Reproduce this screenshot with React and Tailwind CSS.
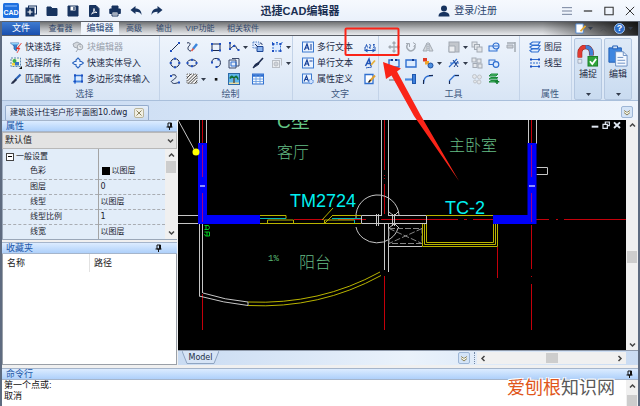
import React from "react";

const INK = "#1b2a4e";
const BLUE = "#2f6fd0";
const GREY = "#a3aab3";

function Icon({ children, size = 12, label }) {
  return (
    <svg
      viewBox="0 0 12 12"
      width={size}
      height={size}
      fill="none"
      stroke={INK}
      strokeWidth="1"
      className="shrink-0"
      role={label ? "img" : undefined}
      aria-label={label}
      aria-hidden={label ? undefined : true}
    >
      {children}
    </svg>
  );
}

const Dot = ({ x, y, c = "#1f4fc0" }) => (
  <rect x={x - 1} y={y - 1} width="2" height="2" fill={c} stroke="none" />
);

const ICONS = {
  quick: (
    <>
      <path d="M.5 2h8.500L6.500 5v5L4 8V5z" fill="#3b83cf" stroke="#1e5aa0" strokeWidth=".7" />
      <path d="M1 2h8L8 3.500H2z" fill="#8fd0f5" stroke="none" />
      <path d="M11.500 2L8 7h2l-3 5L9 8H6z" fill="#e8281e" stroke="#e8281e" strokeWidth=".4" />
    </>
  ),
  selectAll: (
    <>
      <rect x="1" y="1" width="9.500" height="8.500" fill="#eef6e0" stroke="#5b86b5" strokeDasharray="2 1" />
      <circle cx="4.500" cy="4" r="2" fill="#3aa84a" stroke="none" />
      <rect x="5" y="5" width="4" height="3.500" fill="#3674c9" stroke="none" />
      <rect x="2" y="6" width="3" height="2.500" fill="#f3cf3c" stroke="none" />
      <path d="M12 9v3H9z" fill="#111" stroke="none" />
    </>
  ),
  match: (
    <>
      <path d="M10.500 1.500L5 7" stroke="#2b62b5" strokeWidth="2.200" />
      <path d="M5.500 5.500l1.500 1.500L3.500 10.500 1 11l.8-2z" fill="#27304a" stroke="none" />
    </>
  ),
  blockEdit: (
    <g stroke={GREY}>
      <path d="M1 3l4-2 4 2-1 3-3 1-3-1z" fill="#d5d9de" />
      <circle cx="8" cy="6" r="2.800" fill="#e8ebee" />
      <path d="M6 8l-2 3M8 4.500V6h1.500" />
    </g>
  ),
  importSolid: (
    <path d="M6 1L8 3v1.500h1.500L11.500 6l-2 1.500H8V9L6 11 4 9V7.500H2.500L.5 6l2-1.500H4V3z" stroke="#2c66c0" fill="#eaf3ff" strokeWidth="1.100" />
  ),
  polySolid: (
    <>
      <path d="M3 2.500h7v6H3z" fill="#dcebff" stroke={BLUE} strokeWidth="1.300" />
      <path d="M3 1v10M1 8.500h10" stroke="#4a8ae0" strokeWidth="1.300" />
      <Dot x={3} y={2.5} /><Dot x={10} y={2.5} /><Dot x={3} y={8.5} /><Dot x={10} y={8.5} />
    </>
  ),
  line: (<><path d="M2.500 9.500l7-7" /><Dot x={2} y={10} /><Dot x={10} y={2} /></>),
  sketch: (
    <>
      <path d="M1 2c3-1 4 1 2 3s-1 5 2 5" />
      <path d="M11 3L7 8" stroke="#3a86dd" strokeWidth="2.400" />
      <path d="M7.500 7.500L5.500 10" stroke="#e05848" strokeWidth="1.600" />
    </>
  ),
  rect: (<><path d="M2 3h8v6.500H2z" /><Dot x={2} y={3} /><Dot x={10} y={3} /><Dot x={2} y={9.5} /><Dot x={10} y={9.5} /></>),
  pline: (<><path d="M2 1v7l4-3.500c2-1.500 2 4.500 5 4.500" /><Dot x={2} y={2} /><Dot x={2} y={8} /><Dot x={6} y={5} /><Dot x={10.5} y={9} /></>),
  copyBlock: (
    <>
      <path d="M1 1h6v6H1z" fill="#dbe9ff" stroke="#5180c4" strokeDasharray="1.500 1" />
      <path d="M5 5.500h6v5H5z" fill="#8cb4ee" stroke="#1c4696" />
      <path d="M3 3l3 3M8 2c2 0 2 1 2 2" stroke="#1c3060" />
    </>
  ),
  region: (
    <>
      <path d="M2 3h7.500v7H2z" stroke={BLUE} strokeDasharray="2 1" fill="#dcebff" />
      <path d="M1 1l2 2M9.500 3l2-2M5 1.500h2" stroke={BLUE} />
      <Dot x={2} y={3} /><Dot x={2} y={10} /><Dot x={9.5} y={10} /><Dot x={9.5} y={3} />
    </>
  ),
  circle: (<><circle cx="6" cy="6" r="4.300" /><Dot x={6} y={1.7} /><Dot x={6} y={10.3} /><Dot x={1.7} y={6} /><Dot x={10.3} y={6} /></>),
  ellipse: (<><ellipse cx="6" cy="6" rx="4.600" ry="3.200" /><Dot x={6} y={2.8} /><Dot x={6} y={9.2} /><Dot x={1.5} y={6} /><Dot x={10.5} y={6} /></>),
  arc: (<><path d="M1.800 5.500A4.300 4.300 0 1 1 6.500 10" /><Dot x={2} y={5.5} /><Dot x={6.5} y={10} /><Dot x={8.5} y={2.5} /></>),
  wipe: (
    <>
      <path d="M1 3h7v8H1z" fill="#e3ecf8" stroke="#3c4a6a" />
      <path d="M4 1.500h7v7.500H8" stroke="#3c4a6a" />
      <path d="M3 5h5v4H3z" stroke={BLUE} />
    </>
  ),
  brush: (<><path d="M11 1L6 6.500" strokeWidth="1.600" /><path d="M6.500 5.500L7 7 3.500 9.500 1 11l2-3.500z" fill={INK} /></>),
  greyBox: (
    <g stroke="#b9bec5">
      <rect x="1.500" y="3.500" width="7" height="7" fill="#e9ecef" />
      <path d="M3.500 1.500h7v7" /><circle cx="5" cy="7" r="2" fill="#cfd3d8" />
    </g>
  ),
  spline: (<><path d="M2 3c2-2.500 7-1 4.500 2S1 7.500 3 9.500s4 .500 7 0" /><Dot x={2} y={3} /><Dot x={10} y={9.5} /></>),
  hatch: (
    <>
      <rect x="1" y="1" width="10" height="9.500" stroke="#777" strokeDasharray="1 1" fill="#f2f2f2" />
      <path d="M1 5l4-4M1 8.500L8.500 1M2 10.500L11 2M5 10.500l6-6M8.500 10.500L11 8" stroke="#333" strokeWidth=".9" />
    </>
  ),
  point: <rect x="4.800" y="5" width="2.600" height="2.600" fill="#111" stroke="none" />,
  image: (
    <>
      <rect x=".5" y=".5" width="11" height="11" fill="#5fb6ea" stroke="#2c6aa8" />
      <path d="M1 9.500h10V11H1z" fill="#e9dca0" stroke="none" />
      <path d="M6 4v6" stroke="#5a3a18" strokeWidth="1.200" />
      <path d="M6 4.500C4 2 2 3 2 5.500 3 4.500 4.500 4.500 6 4.500 8 4 9.500 4.500 10 6.500 10 3 8 2 6 4.500z" fill="#138038" stroke="#0d6a2c" />
    </>
  ),
  table: (
    <>
      <rect x=".5" y="1" width="11" height="10" fill="#f3f9ff" stroke={BLUE} />
      <path d="M.5 2.500h11" stroke={BLUE} strokeWidth="2.500" />
      <path d="M.5 6h11M.5 8.500h11M4 2v9M8 2v9" stroke="#5f98e0" strokeWidth=".8" />
    </>
  ),
  mtext: (
    <>
      <rect x=".5" y="1" width="11" height="10" fill="#eaf3ff" stroke="#3b79cf" />
      <path d="M2.500 9L5 3l2 6M3.500 7h3" stroke="#143f98" strokeWidth="1.200" />
      <path d="M9 3v6" stroke="#143f98" />
    </>
  ),
  stext: (
    <>
      <rect x=".5" y="1" width="11" height="10" fill="#eaf3ff" stroke="#3b79cf" />
      <path d="M2.500 9L5 3l2 6M3.500 7h3" stroke="#143f98" strokeWidth="1.200" />
      <path d="M7.500 4h3" stroke="#143f98" />
    </>
  ),
  attdef: (
    <>
      <rect x=".5" y="1" width="9" height="9" fill="#eaf3ff" stroke="#3b79cf" />
      <path d="M2 8.500L4.500 3l2 5.500M3 6.500h3" stroke="#143f98" strokeWidth="1.100" />
      <circle cx="9" cy="8.500" r="2.200" fill="#cfe2ff" stroke="#2f6fd0" strokeDasharray="1.200 .6" />
    </>
  ),
  dim: (
    <>
      <path d="M1 6v4M11 6v4M1 9.500h10" stroke="#2156b8" />
      <path d="M.5 9.500l3-2v4zM11.500 9.500l-3-2v4z" fill="#2156b8" stroke="none" />
      <path d="M1.500 6.500l1-3 1 3M5 4c1-1 2 0 1.500 1L5 7h2M9 3.500h1.500l-1 1.500c1.500 0 1 2-.5 1.500" stroke="#2156b8" />
    </>
  ),
  textEdit: (
    <>
      <path d="M1.500 9L5 2l2 7M3 6.500h4" stroke="#2156b8" strokeWidth="1.500" />
      <path d="M11 3.500L7 8" stroke="#e8b03a" strokeWidth="1.800" />
      <path d="M2 11c2-1 5 0 6-1.500" stroke="#2156b8" />
    </>
  ),
  editBox: (
    <>
      <path d="M1 1.500h8v9H1z" fill="#fff" stroke={BLUE} strokeWidth="1.300" />
      <path d="M11 2.500L6 8" stroke="#e0a030" strokeWidth="2" />
      <path d="M6.500 7L4.500 9.500" stroke="#222" strokeWidth="1.300" />
    </>
  ),
  move: <path d="M6 1v10M1 6h10M4.500 2.500L6 1l1.500 1.500M4.500 9.500L6 11l1.500-1.500M2.500 4.500L1 6l1.500 1.500M9.500 4.500L11 6 9.500 7.500" stroke={GREY} strokeWidth="1.300" />,
  rotate: (<><path d="M3 3a4 4 0 1 0 6.500 1" stroke={GREY} strokeWidth="1.500" /><path d="M1 2.500h3.500V6M8 1.500l3 2-2.500 2" stroke={GREY} /></>),
  mirror: (<><path d="M5 2v8H1zM7 2v8h4z" fill="#d5d9de" stroke={GREY} /><path d="M6 1v10" stroke={GREY} strokeDasharray="1 1" /></>),
  scale: (<><rect x="1" y="1" width="10" height="10" fill="#c3c7cd" stroke={GREY} /><path d="M1 5h6v6H1z" fill="#eceef1" stroke={GREY} /></>),
  copy: (<g stroke={GREY} fill="#e3e6ea"><rect x="1" y="1" width="5" height="5" /><rect x="3.500" y="3.500" width="5" height="5" /><rect x="6" y="6" width="5" height="5" /></g>),
  array: (<g stroke={GREY} fill="#e3e6ea"><rect x="1" y="1" width="4" height="4" /><rect x="6" y="2" width="4" height="4" /><rect x="2" y="6.500" width="4" height="4" /><rect x="7" y="7" width="4" height="4" /></g>),
  offset: (<><rect x="1" y="5" width="8" height="5" fill="#dcebff" stroke={BLUE} /><circle cx="8" cy="5" r="3" fill="#dcebff" stroke={BLUE} strokeWidth="1.200" /><path d="M6 5h4" stroke={BLUE} /></>),
  offset2: (<><rect x="1" y="3" width="6" height="4.500" stroke={BLUE} fill="#dcebff" /><circle cx="8" cy="7.500" r="2.800" stroke={BLUE} fill="#dcebff" strokeWidth="1.200" /></>),
  align: (<><path d="M2 2h8M10 1v10" stroke={GREY} strokeWidth="1.500" /><path d="M2 4h6v3H2z" fill="#c9cdd3" stroke={GREY} /></>),
  breakBox: (<><path d="M4 3H1v7h10V3H8" stroke={BLUE} strokeWidth="1.400" fill="#dcebff" /><Dot x={4} y={3} c="#123a90" /><Dot x={8} y={3} c="#123a90" /></>),
  breakBox2: (<><path d="M1 3h10v7H1z" stroke={BLUE} strokeWidth="1.400" fill="#dcebff" /><Dot x={8} y={3} c="#123a90" /></>),
  join: (<><rect x="1" y="1" width="4" height="3.500" fill="#e03a28" stroke="none" /><rect x="3" y="4" width="4" height="3.500" fill="#f0a52c" stroke="none" /><circle cx="8.500" cy="8.500" r="2.500" fill="#4c8fe0" stroke="#1d4f9f" /></>),
  trim: (<><path d="M1 10L9 2M2 6h9" stroke={BLUE} strokeWidth="1.200" /><path d="M5 3l5 7M10 4l-4 6" stroke="#173c86" /></>),
  explode: (<g fill="#e3e6ea" stroke="#c0c5cb"><circle cx="3.500" cy="3.500" r="2" /><circle cx="8.500" cy="4" r="2" /><circle cx="4" cy="8.500" r="1.500" /><circle cx="8" cy="9" r="2" /></g>),
  lengthen: (<><path d="M1 7h6" stroke={GREY} strokeWidth="2" /><path d="M8 3v7M10 3v7" stroke={GREY} /></>),
  extend: (<><path d="M0 6.500h7" stroke="#4a8ae0" strokeWidth="2.200" /><rect x="7.500" y="1.500" width="3" height="9" fill="#3c7fdc" stroke="#1f57ad" /></>),
  fillet: (<><path d="M1.500 11c0-6 2-8.500 9.500-8.500" stroke={BLUE} strokeWidth="1.300" /><path d="M1.500 11V7M7 2.500h4" stroke={INK} /></>),
  chamfer: (<><path d="M1.500 11V7.500l5-5H11" stroke={BLUE} strokeWidth="1.300" /><path d="M1.500 11V8M7 2.500h4" stroke={INK} /></>),
  layersAdd: (<><path d="M1 3l2-2h7l-2 2zM1 6l2-1.500h7L8 6zM1 9l2-1.500h7L8 9z" fill="#4cb868" stroke="#1d8a3c" /><path d="M9 6.500v4.500M6.800 8.800h4.500" stroke="#128030" strokeWidth="1.600" /></>),
  layers: (<g fill="#e3efff" stroke={BLUE} strokeWidth="1.200"><path d="M1 9.500L3.500 8H11l-2 3H2.500z" /><path d="M1 6L3.500 4.500H11L9 7.500H2.500z" /><path d="M1 3L3.500 1H11L9 4H2.500z" /></g>),
  linetype: (<><path d="M1 2.500h10M1 9.500h10" stroke={BLUE} strokeWidth="1.200" /><path d="M1 6h10" stroke={BLUE} strokeDasharray="2 1" /><Dot x={2} y={2.5} /><Dot x={10} y={2.5} /><Dot x={2} y={9.5} /><Dot x={10} y={9.5} /></>),
};

const Caret = () => (
  <svg viewBox="0 0 5 3" width="5" height="3" className="shrink-0" aria-hidden="true">
    <path d="M0 0h5L2.500 3z" fill="#333c4c" />
  </svg>
);

function Tool({ icon, text, caret, muted, name }) {
  return (
    <button
      type="button"
      aria-label={text ? undefined : name || icon}
      className={`flex h-4 items-center gap-[3px] whitespace-nowrap text-[9px] leading-4 ${muted ? "text-[#98a0ab]" : "text-[#1e2c47]"}`}
    >
      <Icon>{ICONS[icon]}</Icon>
      {text}
      {caret && <Caret />}
    </button>
  );
}

function Group({ title, className, children }) {
  return (
    <section className={`flex shrink-0 flex-col border-r border-[#c3d3e8] pt-[3px] ${className}`}>
      <div className="flex">{children}</div>
      <h2 className="text-center text-[9px] leading-[14px] text-[#41597f]">{title}</h2>
    </section>
  );
}

const Col = ({ className, children }) => <div className={`flex shrink-0 flex-col ${className}`}>{children}</div>;

const Pin = () => (
  <svg viewBox="0 0 7 8" width="7" height="8" aria-hidden="true">
    <path d="M2 1h3.500v4H2zM.5 5h6M3.500 5v3" fill="none" stroke="#111" strokeWidth="1" />
    <path d="M4 1h1.500v4H4z" fill="#111" />
  </svg>
);

function PanelHeader({ title, pin }) {
  return (
    <div className="flex h-3 shrink-0 items-center justify-between border-y border-[#a5b5cb] bg-linear-to-b from-[#dcecff] to-[#aed0fa] pl-1">
      <h2 className="text-[9px] leading-[10px] text-[#2157a8]">{title}</h2>
      <button type="button" aria-label={`固定${title}`} className={pin}>
        <Pin />
      </button>
    </div>
  );
}

function Chevron({ dir, className = "" }) {
  const d = { up: "M1 4.500L3.500 2 6 4.500", down: "M1 2.500L3.500 5 6 2.500", left: "M4.500 1L2 3.500 4.500 6", right: "M2.500 1L5 3.500 2.500 6" }[dir];
  return (
    <svg viewBox="0 0 7 7" width="7" height="7" className={`shrink-0 ${className}`} aria-hidden="true">
      <path d={d} fill="none" stroke="#444" strokeWidth="1.500" />
    </svg>
  );
}

const Heart = () => (
  <button type="button" aria-label="更多" className="flex size-3 shrink-0 items-center justify-center rounded-xs border border-[#9db6d6] bg-[#d4e4f7]">
    <svg viewBox="0 0 8 7" width="8" height="7" aria-hidden="true">
      <path d="M1 1.500l3 2 3-2M1 3.500L4 6l3-2.500" fill="none" stroke="#8d8257" strokeWidth="1" />
      <path d="M1.500 2.800L4 4.500l2.500-1.700" fill="none" stroke="#fffbe0" strokeWidth="1" />
    </svg>
  </button>
);

const QUICK = [
  ["新建", <><rect x="3.500" y="1" width="8" height="8" fill="none" /><rect x="1" y="3" width="8" height="8" fill="#17335f" /><path d="M5 4.500v5M2.500 7h5" stroke="#fff" strokeWidth="1.200" /></>],
  ["打开", <path d="M1 2h4l1 1.500h5V10.500H1z" fill="#17335f" />],
  ["保存", <><path d="M1 1h10v10H1z" fill="#17335f" /><path d="M3.500 1.500h5v4h-5z" fill="#fff" stroke="none" /><path d="M7 2v3" strokeWidth="1.300" /></>],
  ["导出PDF", <><path d="M1.500.5H8l3 3v8H1.500z" fill="#17335f" /><path d="M3.500 9c2-1 2.500-4 2.500-5.500C6 6 7 7.500 9 7.500c-2-.5-4 .500-5.500 1.500z" stroke="#fff" strokeWidth=".9" /></>],
  ["打印", <><path d="M3 1h6v3H3zM.8 4h10.500v4.500H.8z" fill="#17335f" /><path d="M3 7h6v4H3z" fill="#fff" /><path d="M4 9h4" strokeWidth=".8" /></>],
  ["撤销", <path d="M.5 5L5.500 1v2.500c4 0 6 2.500 6 6.500C10.500 7.500 9 6.700 5.500 6.700V9z" fill="#17335f" stroke="none" />],
  ["重做", <path d="M11.500 5L6.500 1v2.500c-4 0-6 2.500-6 6.500C1.500 7.500 3 6.700 6.500 6.700V9z" fill="#17335f" stroke="none" />],
];

function TitleBar() {
  return (
    <header className="relative flex h-[21px] items-center justify-between bg-linear-to-b from-[#f6f9fe] to-[#eaf1fb] pl-[3px] pr-[5px]">
      <div className="flex items-center">
        <svg viewBox="0 0 16 15" width="16" height="15" role="img" aria-label="CAD">
          <rect width="16" height="15" rx="1.500" fill="#1e6fe0" />
          <path d="M2 3h12" stroke="#8fc0ff" strokeWidth="1" />
          <text x="8" y="12" textAnchor="middle" fontSize="7" fontWeight="bold" fill="#fff" className="font-['Liberation_Sans',sans-serif]">CAD</text>
        </svg>
        <div className="ml-[6px] flex gap-[9px]">
          {QUICK.map(([label, art]) => (
            <button key={label} type="button" aria-label={label}>
              <svg viewBox="0 0 12 12" width="12" height="12" fill="none" stroke="#17335f">{art}</svg>
            </button>
          ))}
        </div>
      </div>
      <h1 className="absolute inset-x-0 mx-auto w-fit -translate-x-5 text-[11px] font-bold leading-5 text-[#1a2f52]">迅捷CAD编辑器</h1>
      <div className="flex items-center">
        <button type="button" className="mr-[65px] flex items-center gap-1 text-[10px] leading-5 text-[#29426c]">
          <svg viewBox="0 0 12 12" width="12" height="12" aria-hidden="true">
            <circle cx="6" cy="3.500" r="3" fill="#17335f" />
            <path d="M.5 11.500C.5 8 3 7 6 7s5.500 1 5.500 4.500z" fill="#17335f" />
          </svg>
          登录/注册
        </button>
        <div className="flex items-center gap-[11px]">
          <button type="button" aria-label="菜单"><Icon size={10}><path d="M0 2h12M0 6h12M0 10h12" stroke="#5b6b88" /></Icon></button>
          <button type="button" aria-label="最小化"><Icon size={10}><path d="M1 6h10" strokeWidth="1.500" stroke="#333" /></Icon></button>
          <button type="button" aria-label="最大化"><Icon size={10}><path d="M1 1.500h10v9H1z" strokeWidth="1.300" stroke="#333" /></Icon></button>
          <button type="button" aria-label="关闭"><Icon size={10}><path d="M1 1l10 10M11 1L1 11" strokeWidth="1.200" stroke="#333" /></Icon></button>
        </div>
      </div>
    </header>
  );
}

function Tabs() {
  return (
    <nav className="flex h-[15px] items-stretch justify-between border-y border-[#5a5f68] bg-[linear-gradient(to_right,transparent_85%,rgba(0,0,0,0.85)),linear-gradient(to_bottom,#707274,#b4b6b9_50%,#e9ebee)]">
      <div className="flex">
        <button type="button" className="w-[38px] bg-linear-to-b from-[#3f7bd0] to-[#1a4fae] text-[9px] leading-[13px] text-white">文件</button>
        <button type="button" className="w-[41px] text-[8px] leading-[13px] text-[#33486c]">查看器</button>
        <button type="button" className="w-[38px] bg-[#f0f5fc] text-[9px] leading-[13px] text-[#24406f]">编辑器</button>
        <button type="button" className="w-[30px] text-[8px] leading-[13px] text-[#33486c]">高级</button>
        <button type="button" className="w-[30px] text-[8px] leading-[13px] text-[#33486c]">输出</button>
        <button type="button" className="w-[42px] text-[8px] leading-[13px] text-[#33486c]">VIP功能</button>
        <button type="button" className="w-[44px] text-[8px] leading-[13px] text-[#33486c]">相关软件</button>
      </div>
      <div className="flex items-center gap-[6px] pr-[5px]">
        <button type="button" aria-label="样式" className="flex items-center gap-[2px]">
          <Icon size={11}>
            <path d="M1 1h8v10H1z" fill="#fff" stroke="#4a83cf" />
            <path d="M11.500 3L6 9" stroke="#e6a72e" strokeWidth="2" />
          </Icon>
          <Caret />
        </button>
        <button type="button" aria-label="折叠"><Icon size={9}><path d="M2 6l4-3 4 3M2 9.500l4-3 4 3" stroke="#4c4f55" /></Icon></button>
        <button type="button" aria-label="帮助" className="flex items-center gap-[3px]">
          <span className="flex size-[11px] items-center justify-center rounded-full border border-[#9fc3f2] bg-[#2c6cc8] text-[9px] font-bold leading-none text-white">?</span>
          <Caret />
        </button>
      </div>
    </nav>
  );
}

function Ribbon() {
  return (
    <div className="flex h-[65px] items-stretch border-b border-[#a9bfdb] bg-linear-to-b from-[#eef4fc] to-[#d8e5f5]">
      <Group title="选择" className="w-[158px] pl-2">
        <Col className="w-[62px]">
          <Tool icon="quick" text="快速选择" />
          <Tool icon="selectAll" text="选择所有" />
          <Tool icon="match" text="匹配属性" />
        </Col>
        <Col className="">
          <Tool icon="blockEdit" text="块编辑器" muted />
          <Tool icon="importSolid" text="快速实体导入" />
          <Tool icon="polySolid" text="多边形实体输入" />
        </Col>
      </Group>
      <Group title="绘制" className="w-[133px] pl-[9px]">
        <Col className="w-[17px]"><Tool icon="line" name="直线" /><Tool icon="circle" name="圆" /><Tool icon="spline" name="样条曲线" /></Col>
        <Col className="w-[24px]"><Tool icon="sketch" name="草图" /><Tool icon="ellipse" name="椭圆" /><Tool icon="hatch" name="填充" caret /></Col>
        <Col className="w-[18px]"><Tool icon="rect" name="矩形" /><Tool icon="arc" name="圆弧" /><Tool icon="point" name="点" /></Col>
        <Col className="w-[24px]"><Tool icon="pline" name="多段线" caret /><Tool icon="wipe" name="遮罩" /><Tool icon="image" name="图像" /></Col>
        <Col className="w-[19px]"><Tool icon="copyBlock" name="块" /><Tool icon="brush" name="画笔" /><Tool icon="table" name="表格" /></Col>
        <Col className=""><Tool icon="region" name="面域" caret /><Tool icon="greyBox" name="边界" caret /></Col>
      </Group>
      <Group title="文字" className="w-[86px] pl-[9px]">
        <Col className="w-[62px]">
          <Tool icon="mtext" text="多行文本" />
          <Tool icon="stext" text="单行文本" />
          <Tool icon="attdef" text="属性定义" />
        </Col>
        <Col className=""><Tool icon="dim" name="标注" /><Tool icon="textEdit" name="文字样式" /><Tool icon="editBox" name="编辑文字" /></Col>
      </Group>
      <Group title="工具" className="w-[141px] pl-[9px]">
        <Col className="w-[17px]"><Tool icon="move" name="移动" /><Tool icon="breakBox" name="打断" /><Tool icon="lengthen" name="拉长" /></Col>
        <Col className="w-[17px]"><Tool icon="rotate" name="旋转" /><Tool icon="breakBox2" name="打断于点" /><Tool icon="extend" name="延伸" /></Col>
        <Col className="w-[26px]"><Tool icon="mirror" name="镜像" /><Tool icon="join" name="合并" caret /><Tool icon="fillet" name="圆角" /></Col>
        <Col className="w-[23px]"><Tool icon="scale" name="缩放" caret /><Tool icon="trim" name="修剪" caret /><Tool icon="chamfer" name="倒角" /></Col>
        <Col className="w-[17px]"><Tool icon="copy" name="复制" /><Tool icon="array" name="阵列" /><Tool icon="explode" name="分解" /></Col>
        <Col className="w-[17px]"><Tool icon="offset" name="偏移" /><Tool icon="offset2" name="缩放偏移" /><Tool icon="layersAdd" name="添加图层" /></Col>
        <Col className=""><Tool icon="align" name="对齐" /></Col>
      </Group>
      <Group title="属性" className="w-[52px] pl-[9px]">
        <Col className="h-12">
          <Tool icon="layers" text="图层" />
          <Tool icon="linetype" text="线型" />
        </Col>
      </Group>
      <div className="flex flex-1 gap-[2px] px-[2px] pt-[2px]">
        <BigButton label="捕捉">
          <path d="M3 13V8a6 6 0 0 1 12 0v3" stroke="#8a1d18" strokeWidth="5" />
          <path d="M3 13V8a6 6 0 0 1 6-6" stroke="#e23a30" strokeWidth="4" />
          <path d="M9 2a6 6 0 0 1 6 6v3" stroke="#3e80d8" strokeWidth="4" />
          <path d="M1 15h4v4H1z" fill="#e5e9f0" stroke="#8c99ad" strokeWidth=".7" />
          <rect x="11.500" y="12" width="10" height="10" fill="#2fa53a" stroke="#1b7c26" />
          <path d="M13.500 17l2.500 3 4-5.500" stroke="#fff" strokeWidth="1.800" />
        </BigButton>
        <BigButton label="编辑">
          <path d="M2 3h13v15H2z" fill="#3f86df" stroke="#1f5cb4" />
          <path d="M6 1h5v3H6z" fill="#cfe0f7" stroke="#1f5cb4" />
          <path d="M9 7h8l4 4v11H9z" fill="#f5f9ff" stroke="#6b8fc2" />
          <path d="M17 7v4h4M11 13h6M11 16h8M11 19h8" stroke="#6b8fc2" />
        </BigButton>
      </div>
    </div>
  );
}

function BigButton({ label, children }) {
  return (
    <button type="button" className="flex w-7 flex-col items-center rounded-xs border border-[#b4c7e0] bg-linear-to-b from-[#dde9f7] to-[#c9dbf0] pt-[6px] text-[9px] leading-[14px] text-[#1e2c47]">
      <svg viewBox="0 0 23 23" width="22" height="22" fill="none" aria-hidden="true">{children}</svg>
      {label}
      <span className="flex flex-1 items-end pb-[3px]"><Caret /></span>
    </button>
  );
}

function DocumentTabs() {
  return (
    <div className="flex h-[19px] items-end justify-between bg-linear-to-r from-[#c7daf2] to-[#eef4fc] pl-[3px] pr-[5px]">
      <div className="flex h-[15px] items-center gap-[7px] rounded-t-xs border border-b-0 border-[#93abcc] bg-linear-to-b from-[#e6effa] to-[#cbdcf2] px-1">
        <span className="whitespace-nowrap font-['DejaVu_Sans','Noto_Sans_CJK_SC',sans-serif] text-[8px] leading-[14px] text-[#16233c]">建筑设计住宅户形平面图10.dwg</span>
        <button type="button" aria-label="关闭图纸" className="flex size-[10px] items-center justify-center rounded-xs border border-[#b9b59c] bg-[#f2f0e4]">
          <Icon size={6}><path d="M1 1l10 10M11 1L1 11" stroke="#8a8360" strokeWidth="2" /></Icon>
        </button>
      </div>
      <div className="pb-[2px]"><Heart /></div>
    </div>
  );
}

const PROPS = [["色彩", "以图层", true], ["图层", "0"], ["线型", "以图层"], ["线型比例", "1"], ["线宽", "以图层"]];

function SidePanels() {
  return (
    <aside className="flex w-[175px] shrink-0 flex-col">
      <PanelHeader title="属性" pin="mr-[4px]" />
      <div className="relative">
        <select aria-label="对象" className="block h-[17px] w-full appearance-none border border-[#b8b8b8] bg-[#e3e3e3] pl-[2px] text-[9px] leading-[15px] text-[#222]">
          <option>默认值</option>
        </select>
        <Chevron dir="down" className="pointer-events-none absolute right-[3px] top-[5px]" />
      </div>
      <div className="flex border-b border-l border-[#9aa7b8] bg-[#e2edf9]">
        <table className="flex-1 table-fixed border-collapse font-['DejaVu_Sans','Noto_Sans_CJK_SC',sans-serif] text-[8px] text-[#1c2430]">
          <tbody>
            <tr className="h-[15px]">
              <th scope="colgroup" className="w-[95px] border-r border-[#a4a4a4] p-0 pl-[3px] text-left font-normal leading-[14px]">
                <span className="flex items-center gap-[2px]">
                  <button type="button" aria-label="收起" className="flex size-2 items-center justify-center border border-[#444] bg-white leading-none"><span className="h-px w-1 bg-black" /></button>
                  一般设置
                </span>
              </th>
              <td className="p-0" />
            </tr>
            {PROPS.map(([k, v, swatch]) => (
              <tr key={k} className="h-[15px] border-b border-dashed border-[#a9adb3] last:border-b-0">
                <th scope="row" className="border-r border-solid border-r-[#a4a4a4] p-0 pl-[27px] text-left font-normal leading-[14px]">{k}</th>
                <td className="p-0 pl-[2px] leading-[14px]">
                  <span className="flex items-center gap-[2px]">
                    {swatch && <span className="ml-[1px] size-2 bg-black" />}
                    {v}
                  </span>
                </td>
              </tr>
            ))}
          </tbody>
        </table>
        <div className="flex w-3 shrink-0 flex-col items-center justify-between bg-[#f0f0f0] py-[3px]">
          <Chevron dir="up" />
          <span className="mb-auto mt-[2px] h-3 w-[10px] bg-[#cdcdcd]" />
          <Chevron dir="down" />
        </div>
      </div>
      <div className="h-[2px] shrink-0 bg-[#f0f0f0]" />
      <PanelHeader title="收藏夹" pin="mr-[15px]" />
      <div className="flex-1 border border-t-0 border-[#9aa0a8] bg-white">
        <table className="w-full table-fixed border-collapse text-[9px] leading-[18px] text-[#222]">
          <thead>
            <tr>
              <th scope="col" className="w-1/2 border-r border-[#e2e2e2] p-0 pl-1 text-left font-normal">名称</th>
              <th scope="col" className="p-0 pl-1 text-left font-normal">路径</th>
            </tr>
          </thead>
        </table>
      </div>
    </aside>
  );
}

function FloorPlan() {
  return (
    <svg className="block h-full w-full" role="img" aria-label="住宅户形平面图" fill="none">
      <g transform="translate(-178 -120)">
        <g stroke="#c4000a" strokeWidth="1">
          <path d="M202.500 120v24M202.500 294v36M384.500 120v50M384.500 175v1M384.500 178v1M384.500 184v30M384.500 276v54M531.500 120v24M531.500 225v44M531.500 276v1M531.500 284v46M497.500 247v31" />
          <path d="M294 219.500h30M338 219.500h28M381 219.500h77M464 219.500h3M473 219.500h20M536 219.500h13M556 219.500h2M564 219.500h600" />
        </g>
        <g stroke="#c6c6c6">
          <path d="M199.500 120v24M206.500 120v24M178 215.500h21M178 223.500h21M199.500 224v72M202.500 224v69" />
          <path d="M177 118l18 33" />
          <path d="M381.500 120v96M388.500 120v96M384.500 224v46M388.500 224v48" />
          <path d="M361.500 215.500v8M361.500 215.500h20M388.500 215.500h38M361.500 223.500h65M426.500 216v8M376.500 214v12M378.500 214v12M392.500 214v12M394.500 214v12M389 212l5 4M389 228l5-4M399 211l-4 4M399 228l-4-4" />
          <path d="M389 246.500h33M528.500 120v24M536.500 120v24M536.500 167.500h11v7h-11" />
          <path d="M356 218a21.500 21.500 0 1 1 43 -3M356 227a21.500 19.500 0 0 0 42 1" />
          <path d="M203 293Q225 300 248 302V305.500Q224 303 199 296" />
        </g>
        <g stroke="#858585">
          <path d="M389 228.500h33v15h-33z" strokeDasharray="6 2" />
          <path d="M389 228.500l33 15M422 228.500l-33 15" strokeDasharray="6 2" />
        </g>
        <g stroke="#b9b400">
          <path d="M260 215.500h26v3M260 223.500h101M267.500 223v-3h26v3M332 215.500h29M324.500 223v-3h30M322 220l11-12M325 223l8-8" />
          <path d="M426 215.500h67M422.500 224v22.500h75V224M424.500 224v20.500h71V224M426.500 224v18.500h67V224" />
          <path d="M248 302Q320 305 380 272M248 305.500Q320 309 381 275.500" />
        </g>
        <path d="M260 218.500h26M332 218.500h29M354.500 220v3" stroke="#00b8b8" />
        <path d="M198 143h9v72h53v9h-62zM527.500 143h9v81H493v-9h34.500z" fill="#0000fa" />
        <path d="M202.500 145v32M202.500 193v29M531.500 145v32M531.500 193v29" stroke="#a1008a" />
        <path d="M200 186h5M529 186h6" stroke="#b9b9ff" strokeWidth="1.500" />
        <circle cx="196" cy="152" r="3.500" fill="#ffff00" />
        <path d="M204.500 225.500h4l1 2-1 2h-4M206 226v3M204.500 232h5v4h-4l-1-2M207 232v4" stroke="#00d020" />
        <g fontSize="16" fontWeight="300" fill="#66bd84" className="font-['Noto_Sans_CJK_SC',sans-serif]">
          <text x="277" y="158">客厅</text>
          <text x="449" y="151">主卧室</text>
          <text x="299" y="268">阳台</text>
          <text x="277" y="128" fontSize="19" fontWeight="400" fill="#63c684" className="font-['Liberation_Sans','Noto_Sans_CJK_SC',sans-serif]">C型</text>
        </g>
        <text x="268" y="261" fontSize="9" fill="#58b873" className="font-['Liberation_Mono',monospace]">1%</text>
        <g fontSize="18" fill="#00f0f0" className="font-['Liberation_Sans',sans-serif]">
          <text x="290" y="207">TM2724</text>
          <text x="445" y="214">TC-2</text>
        </g>
      </g>
    </svg>
  );
}

function DrawingArea() {
  return (
    <div className="flex min-w-0 flex-1 flex-col">
      <div className="flex min-h-0 flex-1">
        <div className="relative min-w-0 flex-1 overflow-hidden bg-black">
          <div className="absolute inset-0"><FloorPlan /></div>
          <div className="absolute right-[5px] top-[1px] flex gap-[3px]">
            <button type="button" aria-label="最小化图纸"><Icon size={8}><path d="M1 8.500h10" stroke="#dfe6f0" strokeWidth="3" /></Icon></button>
            <button type="button" aria-label="还原图纸"><Icon size={8}><path d="M5 4V1.500h6V7H8M1.500 5H8v6H1.500z" stroke="#dfe6f0" strokeWidth="1.800" /></Icon></button>
            <button type="button" aria-label="关闭此图纸"><Icon size={8}><path d="M1.500 2l9 8.500M10.500 2l-9 8.500" stroke="#dfe6f0" strokeWidth="2.800" /></Icon></button>
          </div>
        </div>
        <div className="flex w-3 shrink-0 flex-col items-center justify-between bg-[#f0f0f0] py-[2px]">
          <Chevron dir="up" />
          <span className="mt-[44px] h-3 w-[10px] bg-[#cdcdcd]" />
          <Chevron dir="down" />
        </div>
      </div>
      <div className="flex h-[15px] shrink-0 items-start justify-between border-t border-[#8f9aab] bg-linear-to-r from-[#c9dbf2] via-[#eaf2fb] to-[#c9dbf2] pl-1">
        <button type="button" className="relative h-[13px] w-[37px] font-['DejaVu_Sans',sans-serif] text-[8px] leading-[11px] text-[#222f45]">
          <svg viewBox="0 0 37 13" className="absolute inset-0 h-full w-full" fill="none" aria-hidden="true">
            <path d="M0 0l5 12.500h27L37 0" stroke="#8fa5c2" fill="#d6e4f6" />
          </svg>
          <span className="relative">Model</span>
        </button>
        <div className="flex h-full items-center">
          <Heart />
          <span className="ml-1 h-3 border-l border-dotted border-[#7388a5]" />
          <div className="ml-[2px] mr-3 flex h-3 w-[149px] items-center justify-between bg-[#f0f0f0] px-[3px]">
            <Chevron dir="left" />
            <span className="h-[10px] w-3 bg-[#cdcdcd]" />
            <Chevron dir="right" />
          </div>
        </div>
      </div>
    </div>
  );
}

function CommandLine() {
  return (
    <section className="relative flex h-[38px] shrink-0 flex-col">
      <PanelHeader title="命令行" pin="mr-[5px]" />
      <div className="flex flex-1 justify-between bg-white">
        <div className="pl-[2px] text-[9px] leading-[11px] text-[#111]">
          <p>第一个点或:</p>
          <p>取消</p>
        </div>
        <div className="flex w-3 flex-col items-center gap-[5px] bg-[#f0f0f0] pt-[3px]">
          <Chevron dir="up" />
          <span className="w-[10px] flex-1 bg-[#cdcdcd]" />
        </div>
      </div>
      <p className="absolute right-[23px] top-[10px] text-[18px] leading-5 text-[#595959] [text-shadow:1px_1px_0_#fff,-1px_-1px_0_#fff,1px_-1px_0_#fff,-1px_1px_0_#fff]">
        <span className="text-[#e0561a]">爱刨根</span>知识网
      </p>
    </section>
  );
}

export default function App() {
  return (
    <div className="relative flex min-h-screen flex-col overflow-hidden bg-[#f0f0f0] font-['Liberation_Sans','Noto_Sans_CJK_SC',sans-serif]">
      <TitleBar />
      <div className="flex flex-1 flex-col border-l-2 border-r-2 border-[#5e6b80]">
        <Tabs />
        <Ribbon />
        <DocumentTabs />
        <main className="flex flex-1 gap-px">
          <SidePanels />
          <DrawingArea />
        </main>
        <div className="h-[3px] shrink-0" />
        <CommandLine />
      </div>
      <svg className="pointer-events-none absolute left-0 top-0" width="480" height="200" fill="none" aria-hidden="true">
        <rect x="345.500" y="28.500" width="53" height="26.500" rx="1" stroke="#fa2418" strokeWidth="2" />
        <path d="M383 62l18 6.500-4 3L420.500 115 459 181 414 116 391.500 75.500 386 79z" fill="#fa2418" />
      </svg>
    </div>
  );
}
